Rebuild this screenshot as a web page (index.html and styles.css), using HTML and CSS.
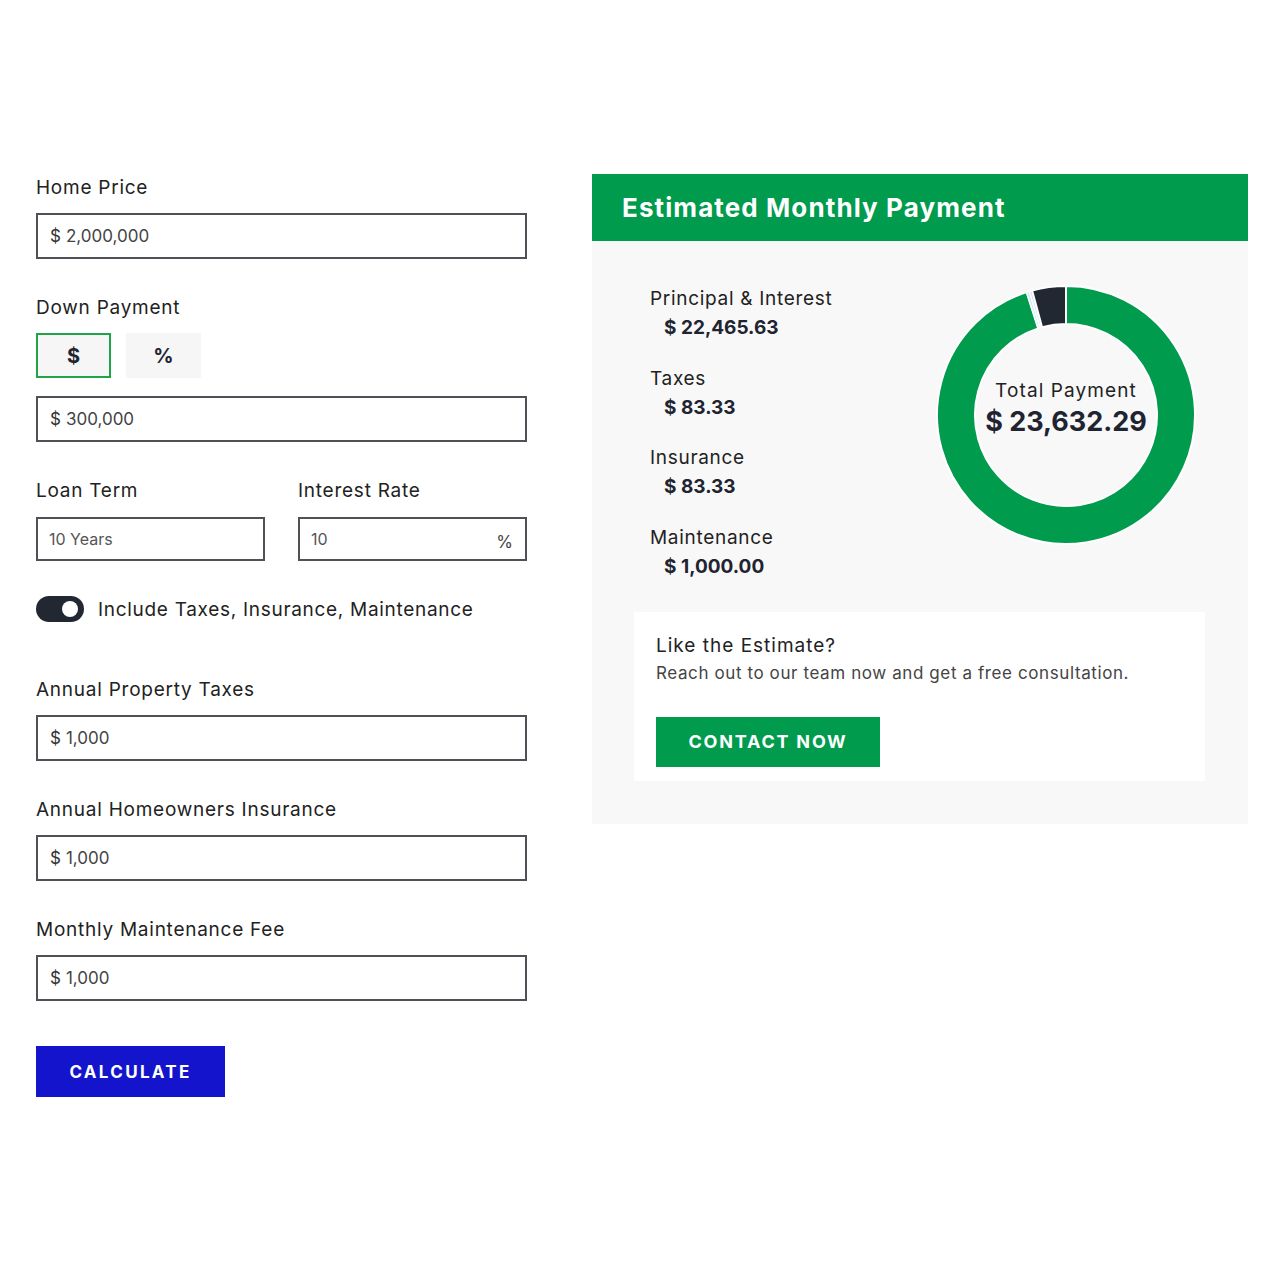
FILE: index.html
```html
<!DOCTYPE html>
<html>
<head>
<meta charset="utf-8">
<link rel="stylesheet" href="styles.css">
</head>
<body>
<div class="page">
  <form class="form">
    <div class="field">
      <div class="label">Home Price</div>
      <div class="input tall"><span class="cur">$</span>2,000,000</div>
    </div>
    <div class="field">
      <div class="label">Down Payment</div>
      <div class="seg">
        <div class="seg-btn active">$</div>
        <div class="seg-btn">%</div>
      </div>
      <div class="input tall dp"><span class="cur">$</span>300,000</div>
    </div>
    <div class="row2">
      <div class="field half">
        <div class="label">Loan Term</div>
        <div class="input short">10 Years</div>
      </div>
      <div class="field half">
        <div class="label">Interest Rate</div>
        <div class="input short rate"><span>10</span><span class="pct">%</span></div>
      </div>
    </div>
    <div class="switch-row">
      <div class="switch"><div class="knob"></div></div>
      <div class="switch-label">Include Taxes, Insurance, Maintenance</div>
    </div>
    <div class="field extra">
      <div class="label">Annual Property Taxes</div>
      <div class="input tall"><span class="cur">$</span>1,000</div>
    </div>
    <div class="field">
      <div class="label">Annual Homeowners Insurance</div>
      <div class="input tall"><span class="cur">$</span>1,000</div>
    </div>
    <div class="field">
      <div class="label">Monthly Maintenance Fee</div>
      <div class="input tall"><span class="cur">$</span>1,000</div>
    </div>
    <div class="calc">CALCULATE</div>
  </form>

  <section class="result">
    <div class="result-head">Estimated Monthly Payment</div>
    <div class="result-body">
      <div class="summary">
        <div class="breakdown">
          <div class="item">
            <div class="item-label">Principal &amp; Interest</div>
            <div class="item-value">$ 22,465.63</div>
          </div>
          <div class="item">
            <div class="item-label">Taxes</div>
            <div class="item-value">$ 83.33</div>
          </div>
          <div class="item">
            <div class="item-label">Insurance</div>
            <div class="item-value">$ 83.33</div>
          </div>
          <div class="item">
            <div class="item-label">Maintenance</div>
            <div class="item-value">$ 1,000.00</div>
          </div>
        </div>
        <div class="donut">
          <svg width="260" height="260" viewBox="0 0 260 260">
            <path fill="#009b4d" stroke="#fff" stroke-width="2" d="M130 1 A129 129 0 1 1 90.62 7.16 L102.22 43.34 A91 91 0 1 0 130 39 Z"/>
            <path fill="#c5e6f3" stroke="#fff" stroke-width="1.5" d="M90.62 7.16 A129 129 0 0 1 93.36 6.31 L104.15 42.75 A91 91 0 0 0 102.22 43.34 Z"/>
            <path fill="#c5e6f3" stroke="#fff" stroke-width="1.5" d="M93.36 6.31 A129 129 0 0 1 96.11 5.53 L106.09 42.20 A91 91 0 0 0 104.15 42.75 Z"/>
            <path fill="#222831" stroke="#fff" stroke-width="2" d="M96.11 5.53 A129 129 0 0 1 130 1 L130 39 A91 91 0 0 0 106.09 42.20 Z"/>
          </svg>
          <div class="donut-center">
            <div class="total-label">Total Payment</div>
            <div class="total-value">$ 23,632.29</div>
          </div>
        </div>
      </div>
      <div class="cta">
        <div class="cta-title">Like the Estimate?</div>
        <div class="cta-text">Reach out to our team now and get a free consultation.</div>
        <div class="cta-btn">CONTACT NOW</div>
      </div>
    </div>
  </section>
</div>
</body>
</html>
```

FILE: styles.css
```css
* { box-sizing: border-box; }
body {
  margin: 0;
  background: #fff;
  font-family: Inter, "Open Sans", sans-serif;
  color: #1f2430;
}
.page {
  display: flex;
  align-items: flex-start;
  padding: 174px 32px 0 36px;
  gap: 65px;
}
.form {
  width: 491px;
  flex: none;
  padding-top: 1px;
}
.field { display: flex; flex-direction: column; }
.field + .field { margin-top: 36px; }
.label {
  font-size: 19px;
  line-height: 24px;
  height: 24px;
  padding-top: 1px;
  margin-bottom: 14px;
  color: #222;
  letter-spacing: 0.75px;
}
.input {
  border: 2px solid #4e5256;
  display: flex;
  align-items: center;
  font-size: 17px;
  color: #444;
  background: #fff;
}
.input.tall { height: 46px; padding-left: 12px; }
.input .cur { color: #333; margin-right: 5px; }
.input.short { height: 44px; padding-left: 11px; font-size: 16px; color: #555; }
.seg { display: flex; gap: 15px; margin-bottom: 18px; }
.seg-btn {
  width: 75px;
  height: 45px;
  display: flex;
  align-items: center;
  justify-content: center;
  background: #f6f6f6;
  font-weight: 700;
  font-size: 20px;
  color: #1f2430;
}
.seg-btn.active { border: 2px solid #21a348; }
.row2 { display: flex; gap: 33px; margin-top: 36px; }
.row2 .field { width: 229px; }
.row2 .field + .field { margin-top: 0; }
.row2 .label { margin-bottom: 15px; }
.rate { justify-content: space-between; padding-right: 12px; }
.rate .pct { font-size: 17px; color: #444; margin-top: 5px; }
.switch-row {
  display: flex;
  align-items: center;
  gap: 14px;
  margin-top: 35px;
  height: 26px;
}
.switch {
  width: 48px;
  height: 26px;
  border-radius: 13px;
  background: #222831;
  display: flex;
  align-items: center;
  justify-content: flex-end;
  padding-right: 6px;
}
.knob { width: 16px; height: 16px; border-radius: 50%; background: #fff; }
.switch-label { font-size: 19px; color: #222; letter-spacing: 0.7px; }
.field.extra { margin-top: 55px; }
.calc {
  margin-top: 45px;
  width: 189px;
  height: 51px;
  background: #1414cc;
  color: #fff;
  font-weight: 700;
  font-size: 17px;
  letter-spacing: 2.3px;
  display: flex;
  align-items: center;
  justify-content: center;
}
.result { width: 656px; flex: none; }
.result-head {
  background: #009b4d;
  color: #fff;
  height: 67px;
  display: flex;
  align-items: center;
  padding-left: 30px;
  font-size: 26px;
  font-weight: 700;
  letter-spacing: 1.1px;
}
.result-body {
  background: #f8f8f8;
  padding: 46px 43px 43px 42px;
}
.summary {
  display: flex;
  justify-content: space-between;
  padding-left: 16px;
  padding-right: 9px;
}
.breakdown { display: flex; flex-direction: column; gap: 26.6px; padding-top: 0; }
.item-label { font-size: 19px; line-height: 24px; color: #222; letter-spacing: 0.7px; }
.item-value {
  font-size: 19px;
  line-height: 24px;
  margin-top: 5px;
  padding-left: 14px;
  font-weight: 700;
  color: #1f2430;
}
.donut { position: relative; width: 260px; height: 260px; margin-top: -2px; }
.donut svg { display: block; }
.donut-center {
  position: absolute;
  inset: 0;
  display: flex;
  flex-direction: column;
  align-items: center;
  justify-content: center;
  padding-bottom: 12px;
}
.total-label { font-size: 19px; line-height: 24px; color: #222; letter-spacing: 1.1px; }
.total-value { font-size: 27px; line-height: 34px; font-weight: 700; color: #1f2430; margin-top: 2px; }
.cta {
  margin-top: 33px;
  background: #fff;
  padding: 22px 22px 14px 22px;
}
.cta-title { font-size: 19px; line-height: 24px; color: #222; letter-spacing: 1px; }
.cta-text { font-size: 17px; line-height: 20px; color: #444; margin-top: 5px; letter-spacing: 0.6px; }
.cta-btn {
  margin-top: 34px;
  width: 224px;
  height: 50px;
  background: #009b4d;
  color: #fff;
  font-weight: 700;
  font-size: 18px;
  letter-spacing: 1.8px;
  display: flex;
  align-items: center;
  justify-content: center;
}
```
